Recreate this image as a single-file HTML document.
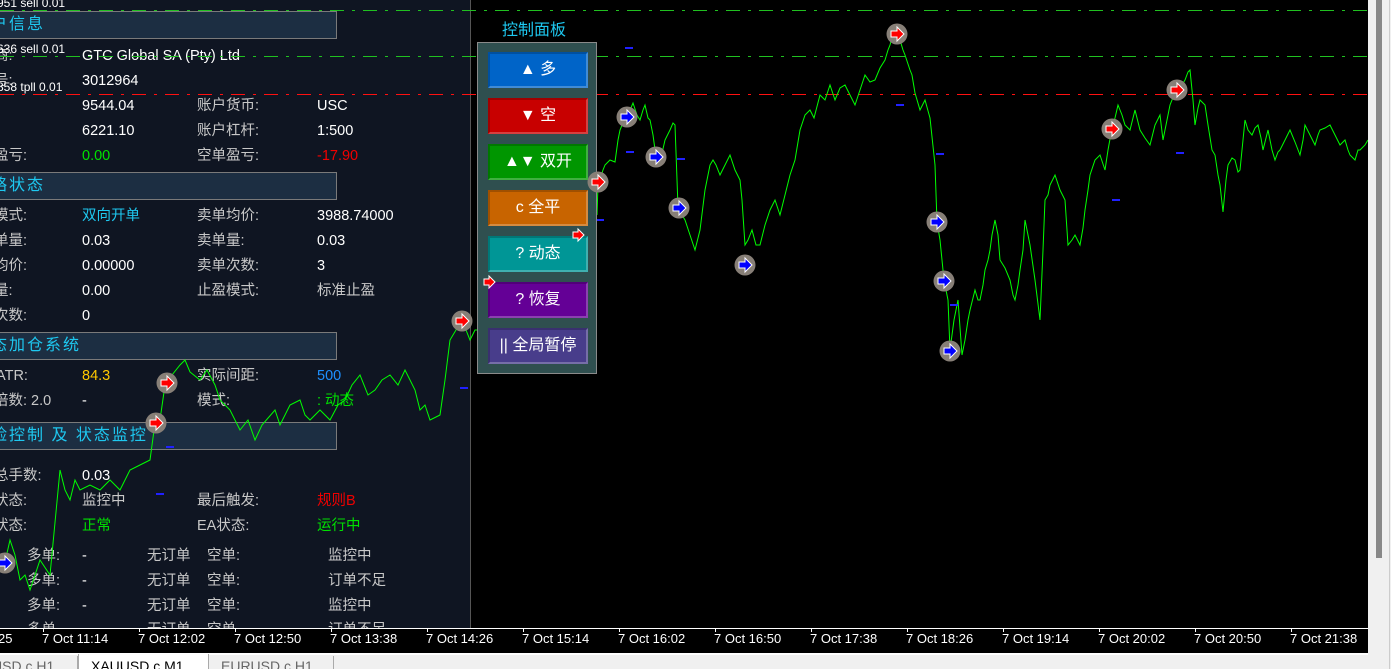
<!DOCTYPE html>
<html style="background:#f0f0f0"><head><meta charset="utf-8"><style>
*{margin:0;padding:0;box-sizing:border-box}
html,body{width:1391px;height:669px;overflow:hidden}
body{background:#000;position:relative;font-family:"Liberation Sans","Noto Sans CJK SC",sans-serif}
.a{position:absolute;white-space:nowrap}
#lp{position:absolute;left:0;top:0;width:471px;height:628px;background:#0f1522;border-right:1px solid #555;overflow:hidden}
.hd{position:absolute;left:-10px;width:347px;height:28px;background:#1c2e42;border:1px solid #7a7a7a;color:#1ec8f0;font-size:16px;line-height:26px;letter-spacing:2px}
.t{position:absolute;font-size:14.5px;color:#c8c8c8;white-space:nowrap;line-height:16px}
.w{color:#fff}
#cp{position:absolute;left:477px;top:42px;width:120px;height:332px;background:#2f4f4f;border:1px solid #8a8a8a}
.b{position:absolute;left:10px;width:100px;height:36px;color:#fff;font-size:16px;text-align:center;line-height:32px;border-bottom:2px solid rgba(255,255,255,.25);border-right:2px solid rgba(255,255,255,.25);border-top:2px solid rgba(0,0,0,.2);border-left:2px solid rgba(0,0,0,.2)}
.ax{position:absolute;top:631px;font-size:13px;color:#fff;white-space:nowrap}
</style></head><body>
<div id="lp">
<div class="hd" style="top:11px">户信息</div>
<div class="hd" style="top:172px">略状态</div>
<div class="hd" style="top:332px">态加仓系统</div>
<div class="hd" style="top:422px">险控制 及 状态监控</div>

<div class="t" style="left:-6px;top:48px">商:</div><div class="t w" style="left:82px;top:48px">GTC Global SA (Pty) Ltd</div>
<div class="t" style="left:-6px;top:73px">号:</div><div class="t w" style="left:82px;top:73px">3012964</div>
<div class="t w" style="left:82px;top:98px">9544.04</div><div class="t" style="left:197px;top:98px">账户货币:</div><div class="t w" style="left:317px;top:98px">USC</div>
<div class="t w" style="left:82px;top:123px">6221.10</div><div class="t" style="left:197px;top:123px">账户杠杆:</div><div class="t w" style="left:317px;top:123px">1:500</div>
<div class="t" style="left:-6px;top:148px">盈亏:</div><div class="t" style="left:82px;top:148px;color:#00e000">0.00</div><div class="t" style="left:197px;top:148px">空单盈亏:</div><div class="t" style="left:317px;top:148px;color:#f00000">-17.90</div>

<div class="t" style="left:-6px;top:208px">模式:</div><div class="t" style="left:82px;top:208px;color:#1ec8f0">双向开单</div><div class="t" style="left:197px;top:208px">卖单均价:</div><div class="t w" style="left:317px;top:208px">3988.74000</div>
<div class="t" style="left:-6px;top:233px">单量:</div><div class="t w" style="left:82px;top:233px">0.03</div><div class="t" style="left:197px;top:233px">卖单量:</div><div class="t w" style="left:317px;top:233px">0.03</div>
<div class="t" style="left:-6px;top:258px">均价:</div><div class="t w" style="left:82px;top:258px">0.00000</div><div class="t" style="left:197px;top:258px">卖单次数:</div><div class="t w" style="left:317px;top:258px">3</div>
<div class="t" style="left:-6px;top:283px">量:</div><div class="t w" style="left:82px;top:283px">0.00</div><div class="t" style="left:197px;top:283px">止盈模式:</div><div class="t" style="left:317px;top:283px">标准止盈</div>
<div class="t" style="left:-6px;top:308px">次数:</div><div class="t w" style="left:82px;top:308px">0</div>

<div class="t" style="left:-4px;top:368px">ATR:</div><div class="t" style="left:82px;top:368px;color:#ffc800">84.3</div><div class="t" style="left:197px;top:368px">实际间距:</div><div class="t" style="left:317px;top:368px;color:#1e90ff">500</div>
<div class="t" style="left:-6px;top:393px">倍数: 2.0</div><div class="t w" style="left:82px;top:393px">-</div><div class="t" style="left:197px;top:393px">模式:</div><div class="t" style="left:317px;top:393px;color:#00e000">: 动态</div>

<div class="t" style="left:-6px;top:468px">总手数:</div><div class="t w" style="left:82px;top:468px">0.03</div>
<div class="t" style="left:-6px;top:493px">状态:</div><div class="t" style="left:82px;top:493px">监控中</div><div class="t" style="left:197px;top:493px">最后触发:</div><div class="t" style="left:317px;top:493px;color:#f00000">规则B</div>
<div class="t" style="left:-6px;top:518px">状态:</div><div class="t" style="left:82px;top:518px;color:#00e000">正常</div><div class="t" style="left:197px;top:518px">EA状态:</div><div class="t" style="left:317px;top:518px;color:#00e000">运行中</div>
<div class="t" style="left:27px;top:548px">多单:</div><div class="t w" style="left:82px;top:548px">-</div><div class="t" style="left:147px;top:548px">无订单</div><div class="t" style="left:207px;top:548px">空单:</div><div class="t" style="left:328px;top:548px">监控中</div>
<div class="t" style="left:27px;top:573px">多单:</div><div class="t w" style="left:82px;top:573px">-</div><div class="t" style="left:147px;top:573px">无订单</div><div class="t" style="left:207px;top:573px">空单:</div><div class="t" style="left:328px;top:573px">订单不足</div>
<div class="t" style="left:27px;top:598px">多单:</div><div class="t w" style="left:82px;top:598px">-</div><div class="t" style="left:147px;top:598px">无订单</div><div class="t" style="left:207px;top:598px">空单:</div><div class="t" style="left:328px;top:598px">监控中</div>
<div class="t" style="left:27px;top:622px">多单</div><div class="t" style="left:147px;top:622px">无订单</div><div class="t" style="left:207px;top:622px">空单</div><div class="t" style="left:328px;top:622px">订单不足</div>
</div>

<div class="a" style="left:-3px;top:-4px;font-size:12px;color:#fff">951 sell 0.01</div>
<div class="a" style="left:-3px;top:42px;font-size:12px;color:#fff">636 sell 0.01</div>
<div class="a" style="left:-3px;top:80px;font-size:12px;color:#fff">858 tpll 0.01</div>

<svg class="a" style="left:0;top:0" width="1368" height="628">
<line x1="0" y1="10.5" x2="1368" y2="10.5" stroke="#20c020" stroke-width="1" stroke-dasharray="14 8 3 8"/>
<line x1="0" y1="56.5" x2="1368" y2="56.5" stroke="#20c020" stroke-width="1" stroke-dasharray="14 8 3 8"/>
<line x1="0" y1="94.5" x2="1368" y2="94.5" stroke="#ff1010" stroke-width="1" stroke-dasharray="14 8 3 8"/>
<polyline fill="none" stroke="#00ff00" stroke-width="1" points="0,560 5,562 10,540 15,555 20,580 25,575 30,590 40,560 50,575 60,470 65,490 70,500 75,480 80,490 90,485 100,490 110,480 120,490 130,470 140,465 150,460 155,423 160,420 165,385 172,375 180,365 185,360 190,372 200,380 207,370 215,385 220,400 230,410 240,430 248,420 255,440 262,425 275,410 280,425 290,405 300,400 305,415 310,420 320,410 330,420 338,405 345,400 352,385 360,375 368,395 375,390 382,380 390,375 398,385 405,370 410,380 415,390 420,410 425,405 430,420 440,415 445,380 450,340 456,330 462,320 470,340 475,330 477,330"/>
<polyline fill="none" stroke="#00ff00" stroke-width="1" points="597,215 598,185 603,170 605,165 610,160 615,162 618,140 620,130 625,118 630,110 633,103 637,115 640,120 643,110 645,105 648,118 650,120 653,135 656,157 660,162 665,140 670,130 673,123 675,125 678,207 682,215 685,220 690,235 695,250 700,230 705,190 710,165 713,160 716,165 720,175 725,165 730,155 735,170 740,180 742,200 745,245 748,240 752,230 756,245 760,245 765,225 770,210 775,200 780,215 785,195 790,175 795,160 800,130 805,115 810,110 814,118 820,95 825,100 830,85 835,100 840,88 845,85 850,95 855,105 860,90 865,75 870,82 875,80 880,68 885,60 888,50 890,45 894,30 897,35 900,40 903,50 905,55 910,70 912,75 915,93 920,110 925,100 930,118 935,165 937,222 940,240 944,280 948,300 950,350 954,320 958,300 962,355 965,340 968,320 970,310 975,290 978,300 980,300 983,285 985,270 988,260 990,250 992,235 995,220 998,235 1000,260 1005,268 1010,280 1013,295 1015,300 1018,285 1020,270 1023,250 1025,220 1028,235 1030,245 1035,280 1040,320 1043,250 1045,200 1048,195 1050,185 1055,175 1060,190 1063,196 1065,200 1068,245 1072,240 1075,235 1080,245 1083,228 1085,210 1088,190 1090,175 1095,160 1100,155 1105,170 1108,150 1112,128 1115,118 1118,105 1122,115 1125,125 1130,130 1135,110 1140,130 1145,138 1150,145 1153,133 1155,125 1160,115 1163,140 1167,120 1170,105 1174,95 1177,90 1182,85 1185,80 1188,72 1190,70 1193,100 1195,125 1198,108 1200,100 1205,105 1208,125 1212,150 1215,155 1218,175 1220,185 1223,212 1226,180 1228,165 1232,158 1235,160 1238,172 1240,170 1243,140 1245,120 1248,130 1252,135 1255,128 1258,125 1261,138 1263,150 1266,138 1268,130 1272,150 1275,160 1278,152 1280,150 1285,140 1290,130 1295,142 1300,155 1303,140 1305,125 1310,135 1315,145 1318,135 1320,130 1325,128 1330,125 1335,135 1340,145 1345,140 1348,150 1350,155 1355,160 1358,150 1360,150 1365,145 1368,140"/>
<g fill="#2020ff">
<rect x="625" y="47" width="8" height="2"/><rect x="626" y="151" width="8" height="2"/><rect x="677" y="158" width="8" height="2"/><rect x="596" y="219" width="8" height="2"/><rect x="896" y="104" width="8" height="2"/><rect x="936" y="153" width="8" height="2"/><rect x="950" y="304" width="8" height="2"/><rect x="1112" y="199" width="8" height="2"/><rect x="1176" y="152" width="8" height="2"/><rect x="460" y="387" width="8" height="2"/><rect x="166" y="446" width="8" height="2"/><rect x="156" y="493" width="8" height="2"/><rect x="545" y="95" width="8" height="2"/>
</g>
</svg>

<div id="cp">
<div class="b" style="top:9px;background:#0064c8">▲ 多</div>
<div class="b" style="top:55px;background:#c80000">▼ 空</div>
<div class="b" style="top:101px;background:#009600">▲▼ 双开</div>
<div class="b" style="top:147px;background:#c86400">c 全平</div>
<div class="b" style="top:193px;background:#009696">? 动态</div>
<div class="b" style="top:239px;background:#640096">? 恢复</div>
<div class="b" style="top:285px;background:#483d8b">|| 全局暂停</div>
</div>
<div class="a" style="left:502px;top:16px;font-size:16px;color:#1ec8f0">控制面板</div>

<svg class="a" style="left:0;top:0" width="1368" height="628">
<defs>
<g id="mr"><circle r="10.5" fill="#877f77"/><path d="M-6,-3 H0 V-7 L7,0 L0,7 V3 H-6 Z" fill="#f00" stroke="#fff" stroke-width="1"/></g>
<g id="mb"><circle r="10.5" fill="#877f77"/><path d="M-6,-3 H0 V-7 L7,0 L0,7 V3 H-6 Z" fill="#00f" stroke="#fff" stroke-width="1"/></g>
<path id="ar" d="M-5,-3 H0 V-6 L6,0 L0,6 V3 H-5 Z" fill="#f00" stroke="#fff" stroke-width="1"/>
</defs>
<use href="#mb" x="627" y="117"/><use href="#mb" x="656" y="157"/><use href="#mb" x="679" y="208"/><use href="#mb" x="745" y="265"/>
<use href="#mr" x="598" y="182"/><use href="#mr" x="462" y="321"/><use href="#mr" x="167" y="383"/><use href="#mr" x="156" y="423"/>
<use href="#mb" x="5" y="563"/><use href="#mr" x="897" y="34"/><use href="#mb" x="937" y="222"/><use href="#mb" x="944" y="281"/><use href="#mb" x="950" y="351"/>
<use href="#mr" x="1112" y="129"/><use href="#mr" x="1177" y="90"/>
<use href="#ar" x="578" y="235"/><use href="#ar" x="489" y="282"/>
</svg>

<div class="a" style="left:0;top:629px;width:1368px;height:24px;background:#000"></div>
<div class="a" style="left:0;top:628px;width:1368px;height:1px;background:#fff"></div>
<svg class="a" style="left:0;top:628px" width="1368" height="6">
<g stroke="#fff"><line x1="43.5" y1="0" x2="43.5" y2="4"/><line x1="139.5" y1="0" x2="139.5" y2="4"/><line x1="235.5" y1="0" x2="235.5" y2="4"/><line x1="331.5" y1="0" x2="331.5" y2="4"/><line x1="427.5" y1="0" x2="427.5" y2="4"/><line x1="523.5" y1="0" x2="523.5" y2="4"/><line x1="619.5" y1="0" x2="619.5" y2="4"/><line x1="715.5" y1="0" x2="715.5" y2="4"/><line x1="811.5" y1="0" x2="811.5" y2="4"/><line x1="907.5" y1="0" x2="907.5" y2="4"/><line x1="1003.5" y1="0" x2="1003.5" y2="4"/><line x1="1099.5" y1="0" x2="1099.5" y2="4"/><line x1="1195.5" y1="0" x2="1195.5" y2="4"/><line x1="1291.5" y1="0" x2="1291.5" y2="4"/></g></svg>
<div class="ax" style="left:-2px">25</div>
<div class="ax" style="left:42px">7 Oct 11:14</div><div class="ax" style="left:138px">7 Oct 12:02</div><div class="ax" style="left:234px">7 Oct 12:50</div><div class="ax" style="left:330px">7 Oct 13:38</div><div class="ax" style="left:426px">7 Oct 14:26</div><div class="ax" style="left:522px">7 Oct 15:14</div><div class="ax" style="left:618px">7 Oct 16:02</div><div class="ax" style="left:714px">7 Oct 16:50</div><div class="ax" style="left:810px">7 Oct 17:38</div><div class="ax" style="left:906px">7 Oct 18:26</div><div class="ax" style="left:1002px">7 Oct 19:14</div><div class="ax" style="left:1098px">7 Oct 20:02</div><div class="ax" style="left:1194px">7 Oct 20:50</div><div class="ax" style="left:1290px">7 Oct 21:38</div>

<div class="a" style="left:0;top:653px;width:1368px;height:2px;background:#fff"></div>
<div class="a" style="left:0;top:655px;width:1391px;height:14px;background:#f0f0f0"></div>
<div class="a" style="left:-8px;top:656px;width:86px;height:13px;border-right:1px solid #aaa;font-size:14px;color:#666;line-height:20px">USD c H1</div>
<div class="a" style="left:78px;top:654px;width:131px;height:15px;background:#fff;border-left:1px solid #aaa;border-right:1px solid #aaa;font-size:14px;color:#000;line-height:24px;padding-left:12px">XAUUSD c M1</div>
<div class="a" style="left:209px;top:656px;width:125px;height:13px;border-right:1px solid #aaa;font-size:14px;color:#666;line-height:20px;padding-left:12px">EURUSD c H1</div>

<div class="a" style="left:1368px;top:0;width:23px;height:669px;background:#f0f0f0"></div>
<div class="a" style="left:1376px;top:0;width:6px;height:558px;background:#888"></div>
<div class="a" style="left:1389px;top:0;width:1px;height:669px;background:#ccc"></div>
</body></html>
